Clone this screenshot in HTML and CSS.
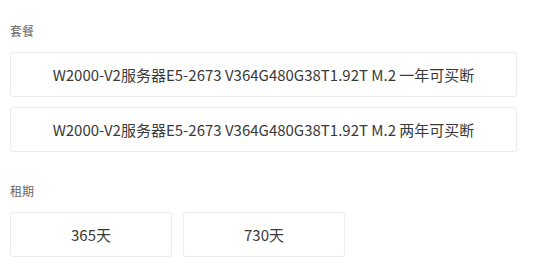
FILE: index.html
```html
<!DOCTYPE html>
<html lang="zh-CN">
<head>
    <meta charset="UTF-8">
    <meta name="viewport" content="width=device-width, initial-scale=1.0">
    <title>套餐选择</title>
    <link rel="stylesheet" href="styles.css">
</head>
<body>
    <div class="options">
        <div class="group">
            <div class="label">套餐</div>
            <div class="list">
                <div class="option">W2000-V2服务器E5-2673 V364G480G38T1.92T M.2 一年可买断</div>
                <div class="option">W2000-V2服务器E5-2673 V364G480G38T1.92T M.2 两年可买断</div>
            </div>
        </div>
        <div class="group">
            <div class="label">租期</div>
            <div class="periods">
                <div class="option">365天</div>
                <div class="option">730天</div>
            </div>
        </div>
    </div>
</body>
</html>
```

FILE: styles.css
```css
body {
    margin: 0;
    background: #fff;
    font-family: "Noto Sans CJK SC", sans-serif;
    color: #333;
}
.options {
    padding: 22px 28px 0 10px;
}
.group + .group {
    margin-top: 30px;
}
.label {
    font-size: 12px;
    color: #666;
    height: 18px;
    line-height: 18px;
    margin-bottom: 12px;
}
.list {
    display: flex;
    flex-direction: column;
    gap: 10px;
}
.periods {
    display: grid;
    grid-template-columns: 162px 162px;
    gap: 11px;
    margin-top: 2px;
}
.option {
    height: 45px;
    box-sizing: border-box;
    border: 1px solid #ececec;
    border-radius: 3px;
    display: flex;
    align-items: center;
    justify-content: center;
    font-size: 15px;
    color: #3a3a3a;
}
```
